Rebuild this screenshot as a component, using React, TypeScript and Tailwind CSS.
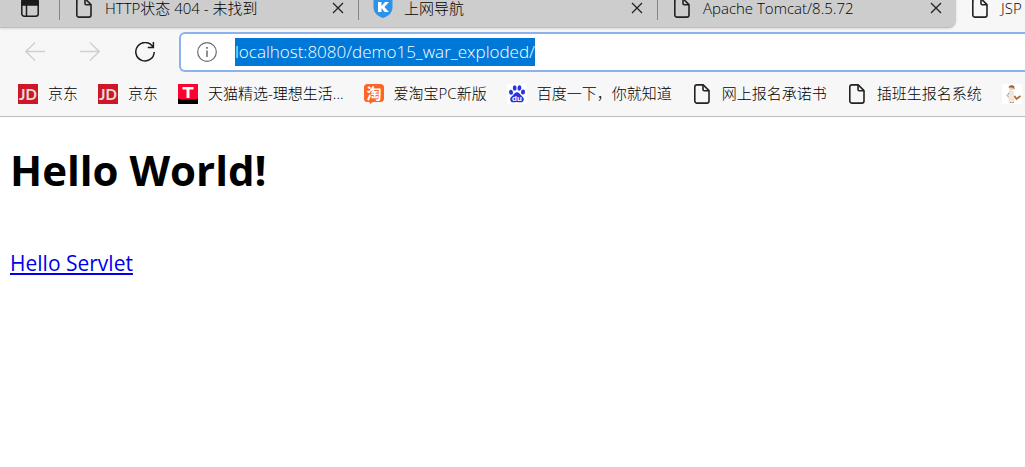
import { useEffect, useRef } from 'react';
import type { ReactNode } from 'react';

type Item = {
  label: string;
  icon: ReactNode;
};

const FileIcon = () => (
  <svg viewBox="0 0 20 20" className="h-5 w-5 shrink-0" fill="none" stroke="#222" strokeWidth="1.6" strokeLinejoin="round">
    <path d="M5 .9h6.2L17 6.6v10.3a2.2 2.2 0 0 1-2.2 2.2H5a2.2 2.2 0 0 1-2.2-2.2V3.1A2.2 2.2 0 0 1 5 .9Z" />
    <path d="M11 1v4.6a1.2 1.2 0 0 0 1.2 1.2H17" />
  </svg>
);

const JdIcon = () => (
  <svg viewBox="0 0 20 20" className="h-5 w-5 shrink-0">
    <rect width="20" height="20" fill="#cf1827" />
    <text x="10" y="16" textAnchor="middle" fontSize="15" fontWeight="700" fill="#e6dcdc" fontFamily="Lato, sans-serif">JD</text>
  </svg>
);

const TmallIcon = () => (
  <svg viewBox="0 0 20 20" className="h-5 w-5 shrink-0">
    <rect width="20" height="20" fill="#ff0030" />
    <path d="M0 14.5c1 0 1.8.9 3 1h14c1.2-.1 2-1 3-1V20H0Z" fill="#000" />
    <path d="M4.5 3h11v2.5h-4V14h-3V5.5h-4Z" fill="#fff" />
  </svg>
);

const TaobaoIcon = () => (
  <svg viewBox="0 0 20 20" className="h-5 w-5 shrink-0">
    <path d="M3.5 0h13A3.5 3.5 0 0 1 20 3.5v11a3.5 3.5 0 0 1-3.5 3.5H9l-3 2-.6-2H3.5A3.5 3.5 0 0 1 0 14.5v-11A3.5 3.5 0 0 1 3.5 0Z" fill="#ff6426" />
    <text x="10" y="14.5" textAnchor="middle" fontSize="15" fontWeight="700" fill="#fff" fontFamily="'Noto Sans CJK SC', sans-serif">淘</text>
  </svg>
);

const BaiduIcon = () => (
  <svg viewBox="0 0 20 20" className="h-5 w-5 shrink-0">
    <rect width="20" height="20" rx="1.5" fill="#fff" />
    <g fill="#2832de">
      <ellipse cx="4" cy="8.3" rx="2" ry="2.5" transform="rotate(-10 4 8.3)" />
      <ellipse cx="7.7" cy="4" rx="1.9" ry="2.7" />
      <ellipse cx="12.4" cy="4" rx="1.9" ry="2.7" transform="rotate(8 12.4 4)" />
      <ellipse cx="16" cy="8" rx="2" ry="2.5" transform="rotate(8 16 8)" />
      <path d="M10 8.2c2 0 2.6 1.5 3.8 2.7 1.3 1.3 3.2 2.3 3 4.500-.2 2-1.600 3-3.500 2.900-1.200 0-2-.3-3.300-.3s-2.100.3-3.300.3c-1.900.1-3.300-.9-3.500-2.900-.2-2.200 1.700-3.200 3-4.500C7.400 9.700 8 8.200 10 8.200Z" />
    </g>
    <text x="10" y="16.8" textAnchor="middle" fontSize="8" fontWeight="700" fill="#fff" fontFamily="'Liberation Sans', sans-serif">du</text>
  </svg>
);

const FigureIcon = () => (
  <svg viewBox="0 0 20 20" className="h-5 w-5 shrink-0">
    <rect width="20" height="20" fill="#fff" />
    <path d="M7.5 7h3l1.5 5-.5 6.5h-4l-1-6Z" fill="#efe9e2" stroke="#d8cfc6" strokeWidth=".6" />
    <circle cx="9.3" cy="4.3" r="2" fill="#f1cfae" />
    <path d="M6.5 3.5C7 .8 11.5.3 12.4 3v3l-1.6-2.6-3.6.2Z" fill="#9a5a2c" />
    <path d="m12.5 12 2 3 4-3" stroke="#b5652f" strokeWidth="1.7" fill="none" />
    <path d="m7 9-2 2.5L6.500 13M8 18.500h1.500m1 0H12" stroke="#b78a68" fill="none" />
  </svg>
);

const KugouIcon = () => (
  <svg viewBox="0 0 20 20" className="h-5 w-5 shrink-0">
    <path d="M.5 2C4 2 7 1 10 0c3 1 6 2 9.5 2v7c0 5.5-4 9.3-9.5 11C4.5 18.3.5 14.5.5 9Z" fill="#2c92ea" />
    <path d="M5 4h3.500v4L12 4h4l-4.500 5 4.300 5h-4.200l-3.100-4v4H5Z" fill="#fff" />
  </svg>
);

const tabs: Item[] = [
  { label: 'HTTP状态 404 - 未找到', icon: <FileIcon /> },
  { label: '上网导航', icon: <KugouIcon /> },
  { label: 'Apache Tomcat/8.5.72', icon: <FileIcon /> },
];

const bookmarks: Item[] = [
  { label: '京东', icon: <JdIcon /> },
  { label: '京东', icon: <JdIcon /> },
  { label: '天猫精选-理想生活...', icon: <TmallIcon /> },
  { label: '爱淘宝PC新版', icon: <TaobaoIcon /> },
  { label: '百度一下，你就知道', icon: <BaiduIcon /> },
  { label: '网上报名承诺书', icon: <FileIcon /> },
  { label: '插班生报名系统', icon: <FileIcon /> },
];

function TabStrip() {
  return (
    <div className="flex h-7 items-end">
      <div className="flex h-10 shrink-0 rounded-br-lg border-b border-[#bdbdbd] bg-[#cdcdcd] shadow-sm">
        <button aria-label="Tab actions" className="flex w-[59px] items-center justify-center">
          <svg viewBox="0 0 20 20" className="h-5 w-5" fill="none" stroke="#1b1b1b" strokeWidth="1.5">
            <rect x="1.8" y="1.8" width="16.4" height="16.4" rx="2.5" />
            <path d="M2 2h16v5H2Z" fill="#1b1b1b" />
            <path d="M6.5 7v11" />
          </svg>
        </button>
        {tabs.map((tab) => (
          <div key={tab.label} className="flex w-[299px] items-center">
            <span className="h-6 w-px bg-[#858585]" />
            <button className="flex min-w-0 flex-1 items-center gap-[11px] pl-3.5 text-left leading-4 whitespace-nowrap">
              {tab.icon}
              <span>{tab.label}</span>
            </button>
            <button aria-label="Close tab" className="mr-2.5 flex h-5 w-5 items-center justify-center">
              <svg viewBox="0 0 12 12" className="h-3 w-3" stroke="#222" strokeWidth="1.3">
                <path d="m1 1 10 10M11 1 1 11" />
              </svg>
            </button>
          </div>
        ))}
      </div>
      <button className="flex h-10 flex-1 items-center gap-[11px] pl-3.5 text-left leading-4 whitespace-nowrap">
        <FileIcon />
        <span>JSP</span>
      </button>
    </div>
  );
}

function AddressBar() {
  const inputRef = useRef<HTMLInputElement>(null);

  useEffect(() => {
    inputRef.current?.focus();
    inputRef.current?.select();
  }, []);

  return (
    <div className="flex items-center pt-1 pl-[15px]">
      <div className="mr-3.5 flex gap-[15px]">
        <button aria-label="Back" disabled className="flex h-10 w-10 items-center justify-center">
          <svg viewBox="0 0 20 20" className="h-5 w-5" fill="none" stroke="#cfcfcf" strokeWidth="1.3">
            <path d="M20 9.5H.8M10 .5l-9.2 9 9.2 9" />
          </svg>
        </button>
        <button aria-label="Forward" disabled className="flex h-10 w-10 items-center justify-center">
          <svg viewBox="0 0 20 20" className="h-5 w-5" fill="none" stroke="#cfcfcf" strokeWidth="1.3">
            <path d="M0 9.5h19.2M10 .5l9.2 9-9.2 9" />
          </svg>
        </button>
        <button aria-label="Refresh" className="flex h-10 w-10 items-center justify-center">
          <svg viewBox="0 0 20 20" className="h-5 w-5" fill="none" stroke="#1b1b1b" strokeWidth="1.5">
            <path d="M18 5.2A9.2 9.2 0 1 0 19.2 10M18.4 0v5.5h-5.6" />
          </svg>
        </button>
      </div>
      <div className="flex h-10 flex-1 items-center gap-[18px] rounded-l-md border-2 border-r-0 border-[#8db1ea] bg-white pl-4">
        <svg viewBox="0 0 20 20" className="h-5 w-5 shrink-0" fill="none" stroke="#6b6b6b" strokeWidth="1.2">
          <circle cx="10" cy="10" r="9.3" />
          <path d="M10 8.5V15" strokeWidth="1.5" />
          <path d="M10 5v1.7" strokeWidth="1.7" />
        </svg>
        <input
          ref={inputRef}
          aria-label="Address"
          defaultValue="localhost:8080/demo15_war_exploded/"
          className="h-7 min-w-0 flex-1 bg-transparent text-[17px] leading-7 text-black outline-none selection:bg-[#0078d7] selection:text-white"
        />
      </div>
    </div>
  );
}

export default function App() {
  return (
    <div className="min-h-screen bg-white font-['Open_Sans','Noto_Sans_CJK_SC',sans-serif] text-black">
      <header className="border-b border-[#bcbcbc] bg-[#f7f7f7] text-[15px] leading-5 font-light">
        <TabStrip />
        <AddressBar />
        <nav className="flex h-11 items-center gap-5 overflow-hidden pl-[18px]">
          {bookmarks.map((item, i) => (
            <a key={i} href="#" className="flex shrink-0 items-center gap-2.5 whitespace-nowrap">
              {item.icon}
              <span className="pb-0.5">{item.label}</span>
            </a>
          ))}
          <a href="#" aria-label="Bookmark" className="shrink-0">
            <FigureIcon />
          </a>
        </nav>
      </header>
      <main className="px-2.5 pt-6">
        <h1 className="text-[42px] leading-[58px] font-bold">Hello World!</h1>
        <a href="#" className="mt-12 inline-block text-[21px] leading-8 text-[#0000ee] underline">
          Hello Servlet
        </a>
      </main>
    </div>
  );
}
